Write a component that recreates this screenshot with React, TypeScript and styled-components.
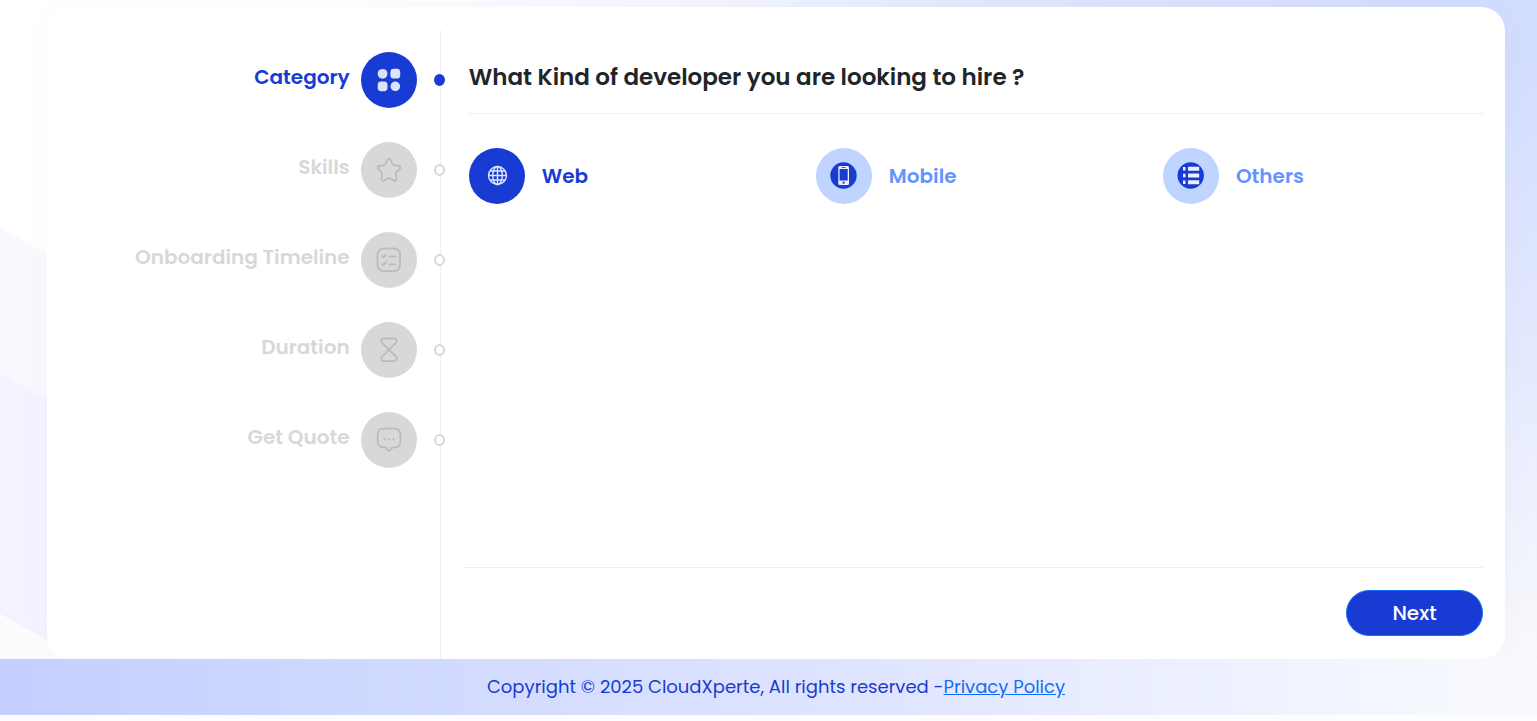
import React, { useState } from "react";
import styled, { createGlobalStyle } from "styled-components";

const blue = "#183bd3";
const rule = "#eeeefb";

const GlobalStyle = createGlobalStyle`
  *, *::before, *::after { box-sizing: border-box; }
  body {
    margin: 0;
    background: #fff;
    font-family: Poppins, Inter, "Liberation Sans", sans-serif;
    color: #212529;
  }
  button, input { font: inherit; }
`;

const Page = styled.div`
  position: relative;
  display: flex;
  flex-direction: column;
  min-height: 100vh;
  padding: 7px 0 6px;
  background: #fdfdff;
`;

const Backdrop = styled.div`
  position: absolute;
  inset: 0 0 62px;
  overflow: hidden;
  background:
    linear-gradient(180deg, rgba(255, 255, 255, 0) 8%, rgba(255, 255, 255, 0.4) 55%, rgba(250, 250, 252, 0.95) 98%),
    linear-gradient(90deg, #fff 20%, #f3f6ff 45%, #e2e6fd 65%, #d3dcfe 92%, #d2dcfe 100%);
`;

const Bands = styled.svg`
  position: absolute;
  left: 0;
  top: 0;
`;

const Card = styled.main`
  position: relative;
  flex: 1;
  display: grid;
  grid-template-columns: 27% 1fr;
  margin: 0 32px 0 47px;
  padding-top: 23px;
  border-radius: 24px;
  background: #fff;
  box-shadow: 0 0 40px rgba(40, 80, 60, 0.02);
`;

const Steps = styled.ol`
  display: flex;
  flex-direction: column;
  gap: 34px;
  margin: 0;
  padding: 22px 0 0;
  list-style: none;
  border-right: 1px solid ${rule};
`;

const Step = styled.li`
  position: relative;
  display: flex;
  justify-content: flex-end;
  padding-right: 23px;
`;

const StepButton = styled.button<{ $active: boolean }>`
  display: flex;
  align-items: center;
  gap: 11px;
  padding: 0;
  border: 0;
  background: none;
  cursor: pointer;
  font-size: 20px;
  line-height: 30px;
  font-weight: 600;
  color: ${(p) => (p.$active ? blue : "#d8d8d8")};
`;

const StepLabel = styled.span`
  padding-bottom: 6px;
`;

const Disc = styled.span<{ $bg: string }>`
  display: grid;
  place-items: center;
  flex: none;
  width: 56px;
  height: 56px;
  border-radius: 50%;
  background: ${(p) => p.$bg};
`;

const Dot = styled.span<{ $active: boolean }>`
  position: absolute;
  right: -5px;
  top: 22px;
  width: 11px;
  height: 12px;
  border-radius: 50%;
  border: 2px solid ${(p) => (p.$active ? blue : "#d8d8d8")};
  background: ${(p) => (p.$active ? blue : "#fff")};
`;

const Panel = styled.section`
  display: flex;
  flex-direction: column;
  padding: 0 22px 23px;
`;

const Question = styled.fieldset`
  flex: 1;
  min-width: 0;
  margin: 0;
  padding: 0 0 0 6px;
  border: 0;
`;

const Title = styled.legend`
  width: 100%;
  padding: 29px 0 18px;
  border-bottom: 1px solid ${rule};
  font-size: 23px;
  line-height: 36px;
  font-weight: 600;
`;

const Options = styled.div`
  display: grid;
  grid-template-columns: repeat(3, 1fr);
  gap: 27px;
  padding-top: 34px;
`;

const Option = styled.label<{ $active: boolean }>`
  position: relative;
  display: flex;
  align-items: center;
  gap: 17px;
  cursor: pointer;
  font-size: 20px;
  line-height: 30px;
  font-weight: 600;
  color: ${(p) => (p.$active ? blue : "#6394ff")};
`;

const Radio = styled.input`
  position: absolute;
  width: 56px;
  height: 56px;
  margin: 0;
  opacity: 0;
  cursor: pointer;
`;

const Actions = styled.div`
  display: flex;
  justify-content: flex-end;
  padding-top: 22px;
  border-top: 1px solid ${rule};
`;

const NextButton = styled.button`
  width: 137px;
  height: 46px;
  border: 1px solid #0d6efd;
  border-radius: 23px;
  background: ${blue};
  color: #fff;
  font-size: 20px;
  font-weight: 500;
  cursor: pointer;
`;

const Footer = styled.footer`
  position: relative;
  padding: 13px 0 13px 15px;
  text-align: center;
  background: linear-gradient(90deg, #c3cfff, #e0e5ff 57%, #f1f5ff 86%, #f9fafe);
  color: ${blue};
  font-size: 18px;
  line-height: 30px;
`;

const PolicyLink = styled.a`
  color: #0d6efd;
  text-decoration: underline;
`;

const line = {
  width: 26,
  height: 26,
  viewBox: "0 0 26 26",
  fill: "none",
  stroke: "#bbb",
  strokeWidth: 1.8,
  strokeLinecap: "round" as const,
  strokeLinejoin: "round" as const,
  "aria-hidden": true,
};

const CategoryIcon = () => (
  <svg width="26" height="26" viewBox="0 0 26 26" fill="#dbe4ff" aria-hidden>
    <circle cx="6.6" cy="6.8" r="4.9" />
    <rect x="14.4" y="1.8" width="9.8" height="9.8" rx="3.4" />
    <rect x="1.7" y="14.4" width="9.8" height="9.8" rx="3.4" />
    <circle cx="19.3" cy="19.3" r="4.8" />
  </svg>
);

const StarIcon = () => (
  <svg {...line}>
    <path d="M11.5 2.8c.6-1.2 2.4-1.2 3 0l2.2 4.6c.3.5.7.8 1.3.9l4.800.7c1.5.2 2 1.9 1 2.9l-3.6 3.6c-.4.4-.5.9-.4 1.4l.8 5c.2 1.5-1.2 2.4-2.5 1.7l-4.2-2.2a2 2 0 0 0-1.8 0l-4.2 2.2c-1.3.7-2.7-.2-2.5-1.7l.8-5c.1-.5-.1-1-.4-1.4L2.2 11.9c-1-1-.5-2.7 1-2.9L8 8.3c.6-.1 1-.4 1.3-.9z" />
  </svg>
);

const ChecklistIcon = () => (
  <svg {...line}>
    <rect x="1.5" y="1.5" width="22.6" height="22.6" rx="6" />
    <path d="M6.3 9.2l1.2 1.2 2.6-3M13.5 9.5h6M6.3 17l1.2 1.2 2.6-3M13.5 17.3h6" />
  </svg>
);

const HourglassIcon = () => (
  <svg {...line}>
    <path d="M8 1.5h10c3 0 3.5 3 1.8 4.7L6.2 19.3C4.5 21 5 24.2 8 24.2h10c3 0 3.5-3.2 1.8-4.9L6.2 6.2C4.5 4.5 5 1.5 8 1.5z" />
  </svg>
);

const QuoteIcon = () => (
  <svg {...line}>
    <path d="M7.5 1.7h11c4 0 5.8 2 5.8 5.7v7.4c0 3.6-2 5.5-5.5 5.5h-1.5c-.7 0-1.2.3-1.6.8l-1.5 2c-.7.9-1.7.9-2.4 0l-1.5-2c-.4-.5-.9-.8-1.6-.8H7.2c-3.5 0-5.5-1.9-5.5-5.5V7.4C1.7 3.7 3.5 1.7 7.5 1.7z" />
    <path d="M8.5 12.2h.01M13 12.2h.01M17.5 12.2h.01" strokeWidth="2.3" />
  </svg>
);

const GlobeIcon = () => (
  <svg width="22" height="22" viewBox="0 0 22 22" fill="none" stroke="#dfe6ff" strokeWidth="1.4" aria-hidden>
    <circle cx="11.5" cy="10.5" r="9" />
    <ellipse cx="11.5" cy="10.5" rx="4.8" ry="9" />
    <path d="M11.5 1.5v18M2.5 10.5h18M4 6h15M4 15h15" />
  </svg>
);

const PhoneIcon = () => (
  <svg width="28" height="28" viewBox="0 0 28 28" aria-hidden>
    <circle cx="13.5" cy="13.5" r="13.2" fill={blue} />
    <rect x="8.3" y="4" width="10.7" height="19" rx="1.5" fill="#eaf0ff" />
    <rect x="9.6" y="7" width="8.1" height="11.5" fill={blue} />
    <path d="M11.6 5.5h4" stroke={blue} strokeWidth="0.8" />
    <circle cx="13.6" cy="20.7" r="1.1" fill={blue} />
  </svg>
);

const ListIcon = () => (
  <svg width="28" height="28" viewBox="0 0 28 28" aria-hidden>
    <circle cx="13.7" cy="13.5" r="13.2" fill={blue} />
    <path
      d="M6 5h2.500v3.400H6zM11 4.800h11.200v4H11zM6 11.800h2.500v3.400H6zM11 11.500h11.200v4H11zM6 18.500h2.500v3.400H6zM11 18.200h11.200v4H11z"
      fill="#eaf0ff"
    />
  </svg>
);

const steps = [
  { label: "Category", Icon: CategoryIcon },
  { label: "Skills", Icon: StarIcon },
  { label: "Onboarding Timeline", Icon: ChecklistIcon },
  { label: "Duration", Icon: HourglassIcon },
  { label: "Get Quote", Icon: QuoteIcon },
];

const options = [
  { label: "Web", Icon: GlobeIcon },
  { label: "Mobile", Icon: PhoneIcon },
  { label: "Others", Icon: ListIcon },
];

export default function App() {
  const [kind, setKind] = useState("Web");

  return (
    <>
      <GlobalStyle />
      <Page>
        <Backdrop>
          <Bands width="600" height="700" aria-hidden>
            <path d="M0 228L600 556V700H0z" fill="#f8f9ff" />
            <path d="M0 373L600 708V950L0 614z" fill="#f2f3ff" />
            <path d="M0 614L600 950H0z" fill="#fcfcff" />
          </Bands>
        </Backdrop>
        <Card>
          <Steps>
            {steps.map(({ label, Icon }, i) => (
              <Step key={label}>
                <StepButton type="button" $active={i === 0} aria-current={i === 0 ? "step" : undefined}>
                  <StepLabel>{label}</StepLabel>
                  <Disc $bg={i === 0 ? blue : "#d8d8d8"}>
                    <Icon />
                  </Disc>
                </StepButton>
                <Dot $active={i === 0} />
              </Step>
            ))}
          </Steps>
          <Panel>
            <Question>
              <Title>What Kind of developer you are looking to hire ?</Title>
              <Options>
                {options.map(({ label, Icon }) => (
                  <Option key={label} $active={label === kind}>
                    <Radio
                      type="radio"
                      name="kind"
                      value={label}
                      checked={label === kind}
                      onChange={() => setKind(label)}
                    />
                    <Disc $bg={label === kind ? blue : "#bfd4ff"}>
                      <Icon />
                    </Disc>
                    {label}
                  </Option>
                ))}
              </Options>
            </Question>
            <Actions>
              <NextButton type="button">Next</NextButton>
            </Actions>
          </Panel>
        </Card>
        <Footer>
          Copyright © 2025 CloudXperte, All rights reserved -<PolicyLink href="#privacy">Privacy Policy</PolicyLink>
        </Footer>
      </Page>
    </>
  );
}
